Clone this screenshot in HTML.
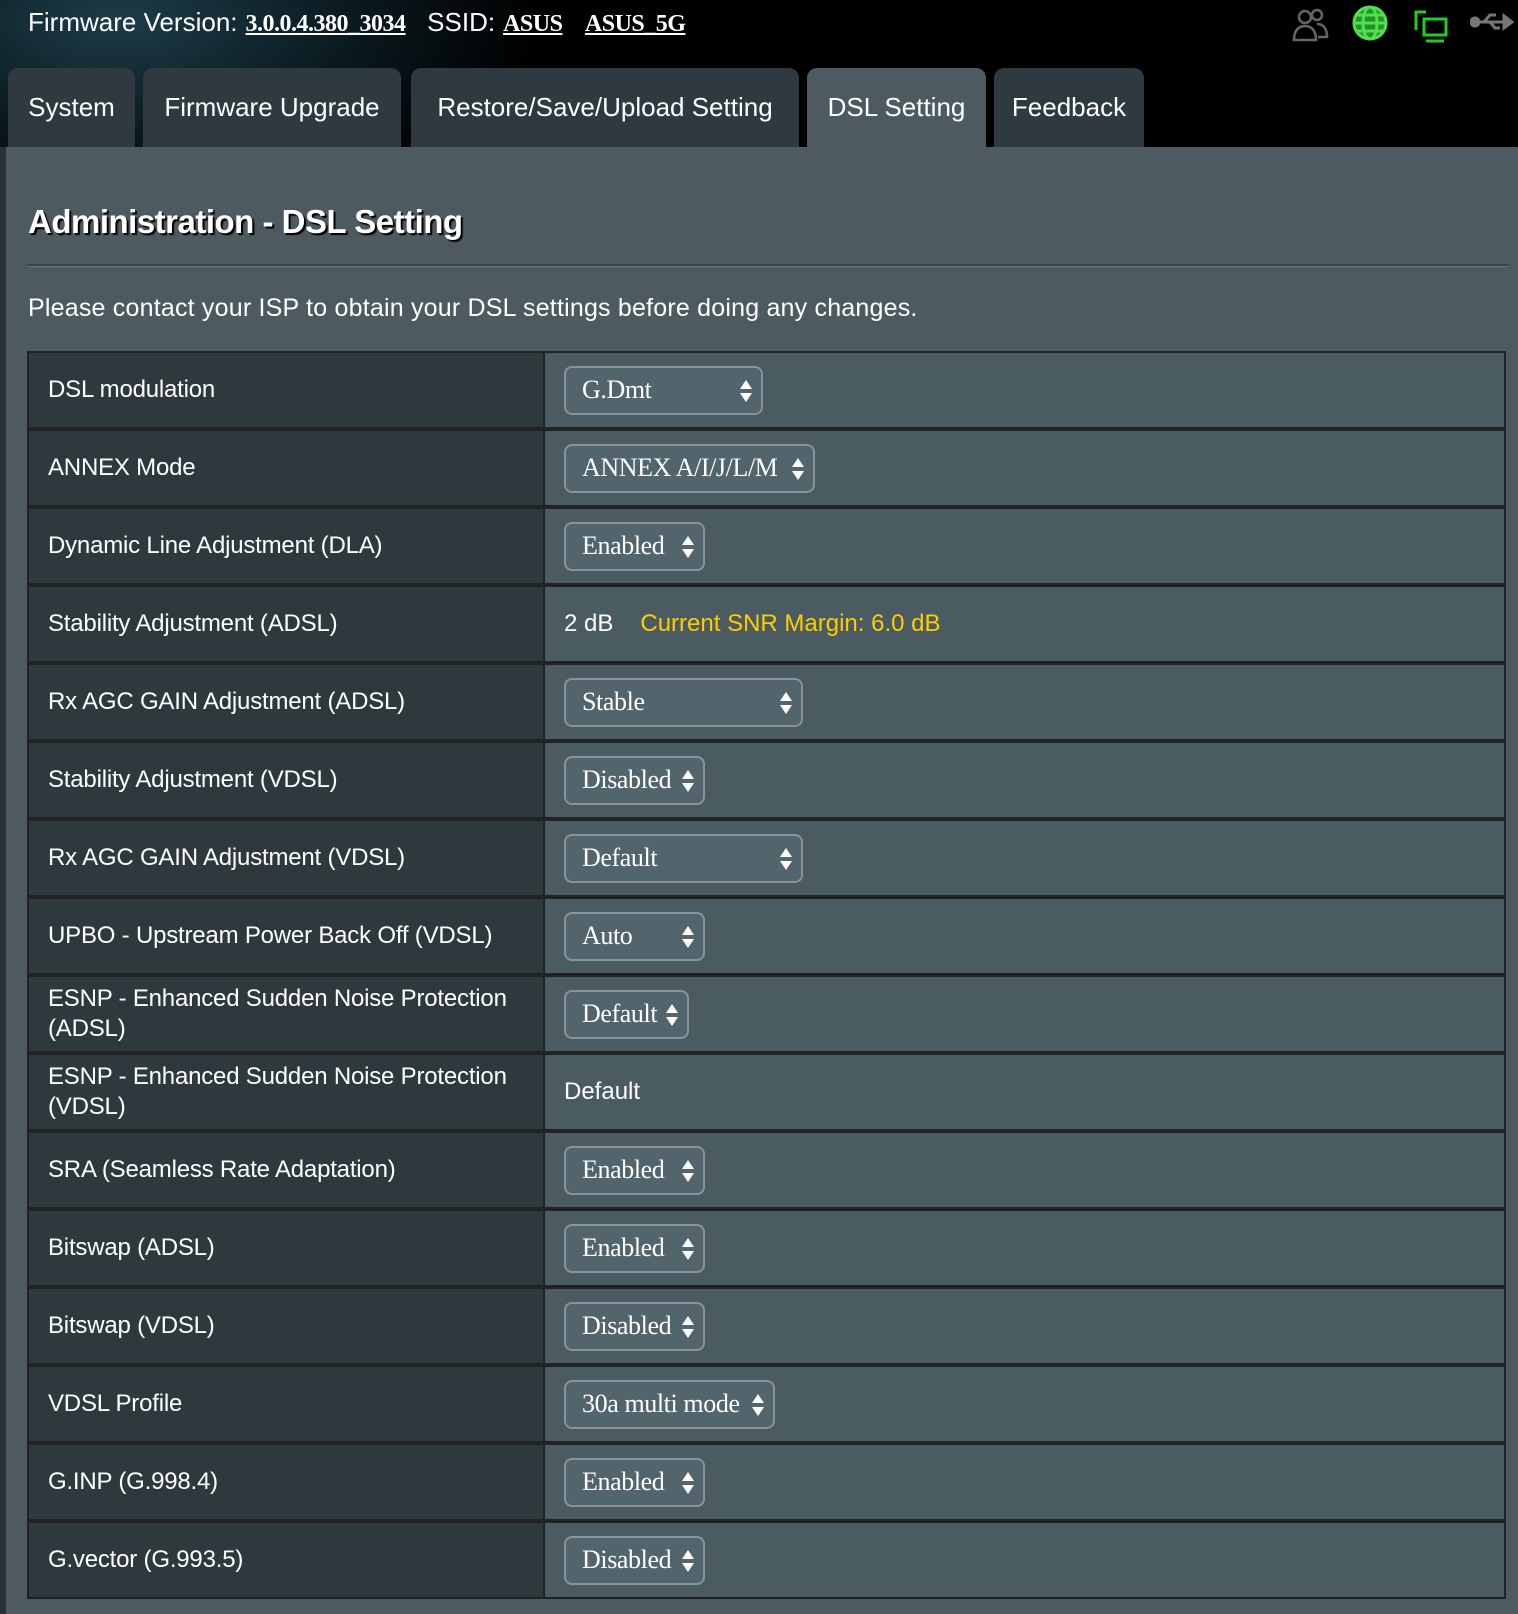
<!DOCTYPE html>
<html><head><meta charset="utf-8"><style>
*{margin:0;padding:0;box-sizing:border-box}
body{width:1518px;height:1614px;background:#4d5a60;font-family:"Liberation Sans",Arial,sans-serif;color:#fff;position:relative;overflow:hidden}
#hdr{position:absolute;left:0;top:0;width:1518px;height:147px;background:radial-gradient(ellipse 420px 200px at 120px 20px,#1d3c48 0%,#0b1a20 55%,#000 100%)}
.fw{position:absolute;left:28px;top:7px;font-size:26px;white-space:nowrap}
.fw u{font-family:"Liberation Serif",serif;font-weight:bold;font-size:24px;margin-left:8px;letter-spacing:-0.5px}
.tab{position:absolute;top:68px;height:79px;background:#2e3a3f;border-radius:10px 10px 0 0;font-size:26px;line-height:79px;text-align:center}
.tab.act{background:#4d5a60}
#left{position:absolute;left:0;top:147px;width:6px;height:1467px;background:#2a3236}
h1{position:absolute;left:28px;top:203px;font-size:33px;font-weight:bold;text-shadow:2px 2px 1px #000;letter-spacing:-0.5px}
#hr{position:absolute;left:27px;top:264px;width:1482px;height:3px;background:#3a4448;border-bottom:1px solid #6b777c}
.note{position:absolute;left:28px;top:294px;font-size:25px;letter-spacing:0.2px}
#tbl{position:absolute;left:27px;top:351px;width:1479px;height:1248px;background:#222;}
.row{position:absolute;left:0;width:1479px;height:78px}
.lab{position:absolute;left:2px;top:2px;width:514px;height:74px;background:#2e393e;padding-left:19px;font-size:24px;display:flex;align-items:center;line-height:30px;letter-spacing:-0.2px}
.val{position:absolute;left:518px;top:2px;width:959px;height:74px;background:#4a5b62;font-size:24px;display:flex;align-items:center;padding-left:19px}
.sel{height:49px;border:2px solid #8a9397;border-radius:8px;background:#52656c;font-family:"Liberation Serif",serif;font-size:26px;padding-left:16px;display:flex;align-items:center;position:relative;letter-spacing:-0.4px}
.sel:after{content:"";position:absolute;right:9px;top:12px;width:0;height:0;border-left:6px solid transparent;border-right:6px solid transparent;border-bottom:9px solid #fff}
.sel:before{content:"";position:absolute;right:9px;top:25px;width:0;height:0;border-left:6px solid transparent;border-right:6px solid transparent;border-top:9px solid #fff}
</style></head><body>
<div id="hdr">
<div class="fw">Firmware Version:<u>3.0.0.4.380_3034</u>&nbsp;&nbsp; SSID:<u>ASUS</u>&nbsp;&nbsp;<u>ASUS_5G</u></div>
<svg style="position:absolute;left:1290px;top:6px" width="40" height="36" viewBox="0 0 40 36"><g fill="none" stroke="#666" stroke-width="2.5"><circle cx="15" cy="11" r="6"/><path d="M4 34c0-10 5-14 11-14s11 4 11 14z"/><circle cx="27" cy="9" r="5"/><path d="M27 18c6 0 10 4 10 13h-9"/></g></svg>
<svg style="position:absolute;left:1351px;top:4px" width="38" height="38" viewBox="0 0 38 38"><g fill="none" stroke="#4ee04e" stroke-width="3"><circle cx="19" cy="19" r="16" fill="#2a8f2a"/><ellipse cx="19" cy="19" rx="7" ry="16"/><path d="M3 19h32M6 11h26M6 27h26"/></g></svg>
<svg style="position:absolute;left:1412px;top:8px" width="38" height="36" viewBox="0 0 38 36"><g fill="none" stroke="#22cc22" stroke-width="3"><path d="M14 4h-10v18"/><rect x="12" y="11" width="22" height="16"/><path d="M14 33h18"/></g></svg>
<svg style="position:absolute;left:1470px;top:10px" width="44" height="24" viewBox="0 0 44 24"><g fill="#777" stroke="#777" stroke-width="3"><circle cx="5" cy="12" r="4"/><path d="M5 12h34" /><path d="M34 6l8 6-8 6z"/><path d="M14 12l6-7h6M20 12l5 6h5" fill="none"/></g></svg>
<div class="tab" style="left:8px;width:127px">System</div>
<div class="tab" style="left:143px;width:258px">Firmware Upgrade</div>
<div class="tab" style="left:411px;width:388px">Restore/Save/Upload Setting</div>
<div class="tab act" style="left:807px;width:179px">DSL Setting</div>
<div class="tab" style="left:994px;width:150px">Feedback</div>
</div>
<div id="left"></div>
<h1>Administration - DSL Setting</h1>
<div id="hr"></div>
<div class="note">Please contact your ISP to obtain your DSL settings before doing any changes.</div>
<div id="tbl">
<div class="row" style="top:0"><div class="lab">DSL modulation</div><div class="val"><div class="sel" style="width:199px">G.Dmt</div></div></div>
<div class="row" style="top:78px"><div class="lab">ANNEX Mode</div><div class="val"><div class="sel" style="width:251px">ANNEX A/I/J/L/M</div></div></div>
<div class="row" style="top:156px"><div class="lab">Dynamic Line Adjustment (DLA)</div><div class="val"><div class="sel" style="width:141px">Enabled</div></div></div>
<div class="row" style="top:234px"><div class="lab">Stability Adjustment (ADSL)</div><div class="val">2 dB<span style="color:#ffcc00;margin-left:27px">Current SNR Margin: 6.0 dB</span></div></div>
<div class="row" style="top:312px"><div class="lab">Rx AGC GAIN Adjustment (ADSL)</div><div class="val"><div class="sel" style="width:239px">Stable</div></div></div>
<div class="row" style="top:390px"><div class="lab">Stability Adjustment (VDSL)</div><div class="val"><div class="sel" style="width:141px">Disabled</div></div></div>
<div class="row" style="top:468px"><div class="lab">Rx AGC GAIN Adjustment (VDSL)</div><div class="val"><div class="sel" style="width:239px">Default</div></div></div>
<div class="row" style="top:546px"><div class="lab">UPBO - Upstream Power Back Off (VDSL)</div><div class="val"><div class="sel" style="width:141px">Auto</div></div></div>
<div class="row" style="top:624px"><div class="lab">ESNP - Enhanced Sudden Noise Protection<br>(ADSL)</div><div class="val"><div class="sel" style="width:125px">Default</div></div></div>
<div class="row" style="top:702px"><div class="lab">ESNP - Enhanced Sudden Noise Protection<br>(VDSL)</div><div class="val">Default</div></div>
<div class="row" style="top:780px"><div class="lab">SRA (Seamless Rate Adaptation)</div><div class="val"><div class="sel" style="width:141px">Enabled</div></div></div>
<div class="row" style="top:858px"><div class="lab">Bitswap (ADSL)</div><div class="val"><div class="sel" style="width:141px">Enabled</div></div></div>
<div class="row" style="top:936px"><div class="lab">Bitswap (VDSL)</div><div class="val"><div class="sel" style="width:141px">Disabled</div></div></div>
<div class="row" style="top:1014px"><div class="lab">VDSL Profile</div><div class="val"><div class="sel" style="width:211px">30a multi mode</div></div></div>
<div class="row" style="top:1092px"><div class="lab">G.INP (G.998.4)</div><div class="val"><div class="sel" style="width:141px">Enabled</div></div></div>
<div class="row" style="top:1170px"><div class="lab">G.vector (G.993.5)</div><div class="val"><div class="sel" style="width:141px">Disabled</div></div></div>
</div>
</body></html>
